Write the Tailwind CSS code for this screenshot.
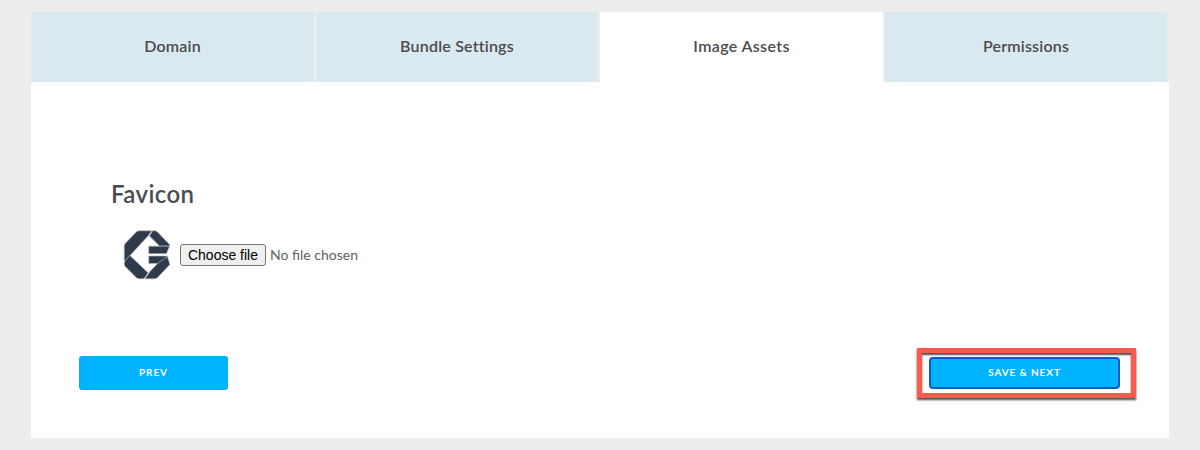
<!DOCTYPE html>
<html lang="en">
<head>
<meta charset="utf-8">
<title>Image Assets</title>
<script src="https://cdn.jsdelivr.net/npm/@tailwindcss/browser@4"></script>
</head>
<body class="bg-[#ededed] font-['Lato',sans-serif] text-[#4c4c4e]">
<div class="h-[450px] overflow-hidden pl-[31px] pt-3">
  <main class="w-[1138px]">
    <nav class="grid h-[70px] grid-cols-[283px_282px_283px_282px] gap-0.5 text-base font-semibold tracking-[0.2px]">
      <a class="flex items-center justify-center bg-[#dae8ef] pb-0.5">Domain</a>
      <a class="flex items-center justify-center bg-[#dae8ef] pb-0.5">Bundle Settings</a>
      <a class="flex items-center justify-center bg-white pb-0.5 tracking-[0.35px]">Image Assets</a>
      <a class="flex items-center justify-center bg-[#dae8ef] pb-0.5">Permissions</a>
    </nav>
    <section class="h-[356px] bg-white pl-12 pr-[33px] pt-24">
      <div class="pl-8">
        <h2 class="h-8 text-2xl leading-8 font-semibold tracking-[0.4px]">Favicon</h2>
        <div class="mt-[15px] flex h-[60px] items-center pl-1">
          <svg class="h-[60px] w-[60px]" viewBox="1 2 176 176">
            <g fill="#2f3a4a" stroke="#b3b5b8" stroke-width="2" stroke-linejoin="round">
              <path d="M72 19H109L98 34L30 108L28 104V64Q28 59 32 55L64 22Q67 19 72 19Z"/>
              <path d="M111 19H118Q122 19 125 22L161 59V64H132L102 34Z"/>
              <path d="M100 64H161L152 86H100Z"/>
              <path d="M100 93H154L140 115H100Z"/>
              <path d="M29 109L44 91L98 142L86 160H73Q68 160 64 157L31 124Q28 121 28 116Z"/>
              <path d="M89 160L104 138L126 115L155 94L162 118L125 157Q121 160 117 160Z"/>
            </g>
          </svg>
          <div class="ml-[5px] flex items-center">
            <button class="h-[22px] w-[86px] rounded-[3px] border border-[#767676] bg-[#efefef] font-['Liberation_Sans',Arial,sans-serif] text-sm leading-5 text-black">Choose file</button>
            <span class="ml-1 text-sm text-[#626264]">No file chosen</span>
          </div>
        </div>
      </div>
      <div class="mt-[63px] flex items-start justify-between">
        <button class="mt-2 h-[34px] w-[149px] rounded-[3px] bg-[#00b3ff] pb-0.5 text-[10px] font-bold tracking-[0.9px] text-white">PREV</button>
        <div class="h-[50px] w-[219px] border-[5px] border-[#ff5a4d] pl-[7px] pt-1 shadow-[0_2px_2px_rgba(0,0,0,0.7),inset_0_2px_2px_rgba(0,0,0,0.7)]">
          <button class="block h-8 w-[191px] rounded-[4px] border-2 border-[#005fcc] bg-[#00b3ff] pb-0.5 text-[10px] font-bold tracking-[0.9px] text-white">SAVE &amp; NEXT</button>
        </div>
      </div>
    </section>
  </main>
</div>
</body>
</html>
